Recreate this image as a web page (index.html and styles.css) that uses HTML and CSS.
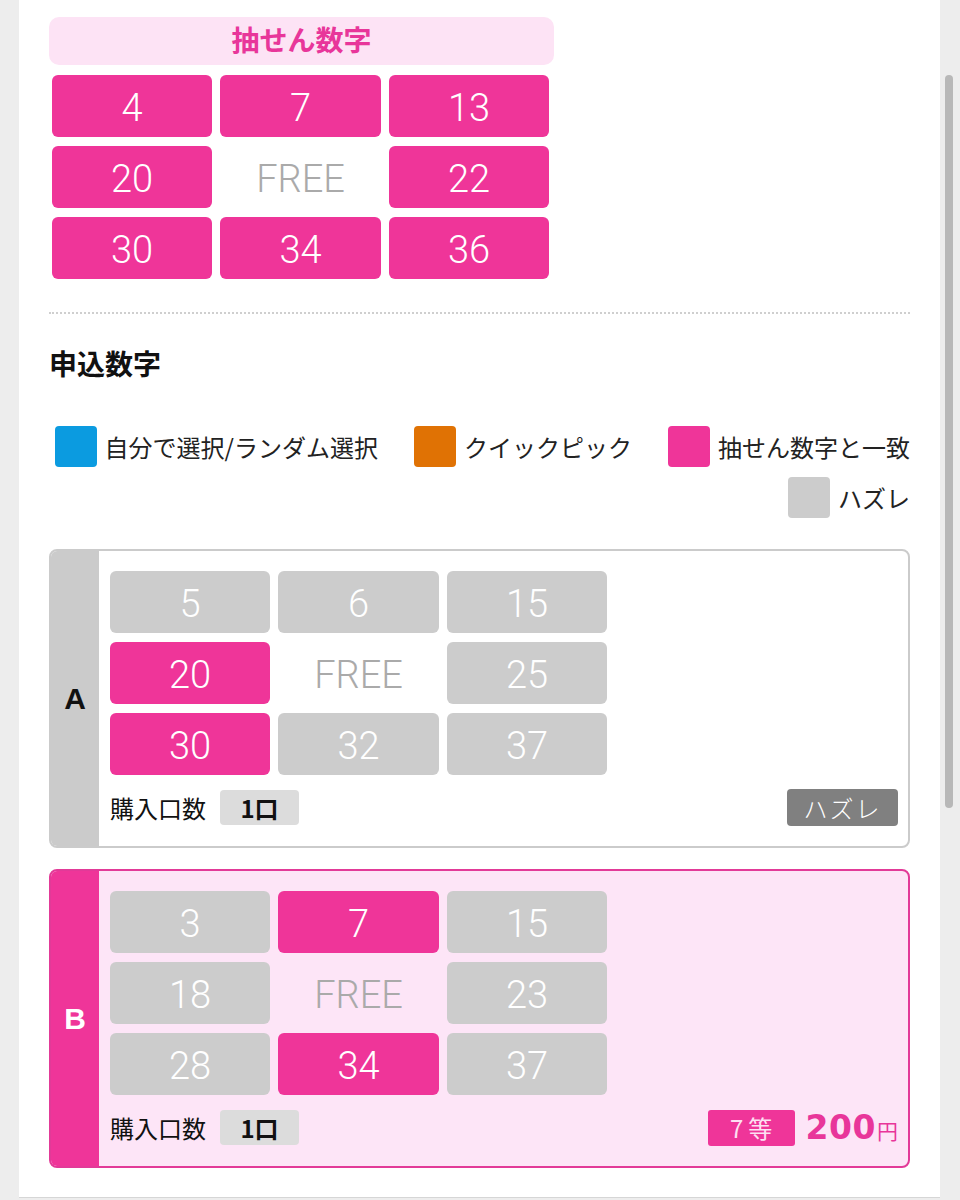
FILE: index.html
```html
<!DOCTYPE html>
<html lang="ja">
<head>
<meta charset="utf-8">
<title>抽せん結果</title>
<link rel="stylesheet" href="styles.css">
</head>
<body>
<div class="page">
  <section class="draw">
    <div class="draw-title">抽せん数字</div>
    <div class="grid draw-grid">
      <div class="cell hit">4</div>
      <div class="cell hit">7</div>
      <div class="cell hit">13</div>
      <div class="cell hit">20</div>
      <div class="cell free">FREE</div>
      <div class="cell hit">22</div>
      <div class="cell hit">30</div>
      <div class="cell hit">34</div>
      <div class="cell hit">36</div>
    </div>
  </section>

  <hr class="divider">

  <h2 class="sec-title">申込数字</h2>

  <ul class="legend">
    <li class="legend-item"><span class="swatch sw-blue"></span><span class="legend-text">自分で選択/ランダム選択</span></li>
    <li class="legend-item"><span class="swatch sw-orange"></span><span class="legend-text">クイックピック</span></li>
    <li class="legend-item"><span class="swatch sw-pink"></span><span class="legend-text">抽せん数字と一致</span></li>
    <li class="legend-item"><span class="swatch sw-gray"></span><span class="legend-text">ハズレ</span></li>
  </ul>

  <div class="ticket ticket-lose">
    <div class="ticket-label">A</div>
    <div class="ticket-body">
      <div class="grid">
        <div class="cell miss">5</div>
        <div class="cell miss">6</div>
        <div class="cell miss">15</div>
        <div class="cell hit">20</div>
        <div class="cell free">FREE</div>
        <div class="cell miss">25</div>
        <div class="cell hit">30</div>
        <div class="cell miss">32</div>
        <div class="cell miss">37</div>
      </div>
      <div class="ticket-foot">
        <div class="qty"><span class="qty-label">購入口数</span><span class="qty-badge">1口</span></div>
        <div class="result"><span class="badge-lose">ハズレ</span></div>
      </div>
    </div>
  </div>

  <div class="ticket ticket-win">
    <div class="ticket-label">B</div>
    <div class="ticket-body">
      <div class="grid">
        <div class="cell miss">3</div>
        <div class="cell hit">7</div>
        <div class="cell miss">15</div>
        <div class="cell miss">18</div>
        <div class="cell free">FREE</div>
        <div class="cell miss">23</div>
        <div class="cell miss">28</div>
        <div class="cell hit">34</div>
        <div class="cell miss">37</div>
      </div>
      <div class="ticket-foot">
        <div class="qty"><span class="qty-label">購入口数</span><span class="qty-badge">1口</span></div>
        <div class="result"><span class="badge-rank">7等</span><span class="prize"><span class="prize-num">200</span><span class="prize-unit">円</span></span></div>
      </div>
    </div>
  </div>
</div>
<div class="scrollbar"></div>
</body>
</html>
```
FILE: styles.css
```css
html, body {
  margin: 0;
  padding: 0;
}
body {
  background: #ededed;
  width: 960px;
  height: 1200px;
  overflow: hidden;
  position: relative;
  font-family: "Noto Sans CJK JP", "Noto Sans", sans-serif;
  color: #111;
}
.page {
  margin-left: 19px;
  width: 921px;
  height: 1198px;
  box-sizing: border-box;
  background: #fff;
  border-bottom: 1px solid #d6d6d6;
  padding: 17px 30px 0 30px;
}

/* draw numbers */
.draw {
  width: 505px;
}
.draw-title {
  height: 48px;
  line-height: 45px;
  background: #fde3f5;
  border-radius: 10px;
  text-align: center;
  color: #e8369a;
  font-weight: 700;
  font-size: 28px;
}
.grid {
  display: grid;
  grid-template-columns: 160px 161px 160px;
  grid-auto-rows: 62px;
  column-gap: 8px;
  row-gap: 9px;
}
.draw-grid {
  margin-top: 10px;
  margin-left: 3px;
}
.cell {
  border-radius: 6px;
  display: flex;
  align-items: center;
  justify-content: center;
  padding-top: 4px;
  box-sizing: border-box;
  font-family: Roboto, "Open Sans", sans-serif;
  font-weight: 300;
  font-size: 38px;
  color: #fff;
}
.cell.hit {
  background: #ef3599;
}
.cell.miss {
  background: #cccccc;
}
.cell.free {
  color: #aaaaaa;
  background: transparent;
}

.divider {
  margin: 33px 0 0 0;
  border: 0;
  border-top: 2px dotted #cfcfcf;
  height: 0;
}
.sec-title {
  margin: 35px 0 0 0;
  font-size: 28px;
  line-height: 28px;
  font-weight: 700;
  color: #111;
}

/* legend */
.legend {
  list-style: none;
  margin: 49px 0 0 0;
  padding: 0;
  display: flex;
  flex-wrap: wrap;
  justify-content: flex-end;
  column-gap: 36px;
  row-gap: 10px;
}
.legend-item {
  display: flex;
  align-items: center;
  gap: 8px;
}
.swatch {
  width: 42px;
  height: 41px;
  border-radius: 4px;
  display: block;
}
.sw-blue { background: #0b9be0; }
.sw-orange { background: #e07204; }
.sw-pink { background: #ef3599; }
.sw-gray { background: #cccccc; }
.legend-text {
  font-size: 24px;
  line-height: 30px;
  color: #222;
}

/* tickets */
.ticket {
  display: flex;
  border: 2px solid #cbcbcb;
  border-radius: 8px;
  overflow: hidden;
  margin-top: 31px;
  background: #fff;
}
.ticket + .ticket {
  margin-top: 21px;
}
.ticket-label {
  width: 48px;
  flex: none;
  background: #cbcbcb;
  display: flex;
  align-items: center;
  justify-content: center;
  font-family: "Liberation Sans", Arial, sans-serif;
  font-weight: 700;
  font-size: 30px;
  color: #111;
}
.ticket-body {
  flex: 1;
  padding: 20px 10px 20px 11px;
}
.ticket-win {
  border-color: #e23a98;
  background: #fde5f7;
}
.ticket-win .ticket-label {
  background: #ef3599;
  color: #fff;
}
.ticket-foot {
  margin-top: 14px;
  height: 37px;
  display: flex;
  align-items: center;
  justify-content: space-between;
}
.qty {
  display: flex;
  align-items: center;
  gap: 14px;
}
.qty-label {
  font-size: 24px;
  color: #111;
}
.qty-badge {
  background: #dcdcdc;
  border-radius: 4px;
  width: 79px;
  height: 35px;
  display: flex;
  align-items: center;
  justify-content: center;
  font-weight: 700;
  font-size: 24px;
  color: #111;
}
.result {
  display: flex;
  align-items: center;
  gap: 11px;
}
.badge-lose {
  background: #808080;
  color: #fff;
  border-radius: 4px;
  width: 111px;
  height: 37px;
  display: flex;
  align-items: center;
  justify-content: center;
  font-size: 24px;
  font-weight: 300;
  letter-spacing: 2px;
}
.badge-rank {
  background: #ef3599;
  color: #fde0f2;
  border-radius: 3px;
  width: 87px;
  height: 36px;
  display: flex;
  align-items: center;
  justify-content: center;
  font-size: 24px;
  letter-spacing: 5px;
  text-indent: 5px;
}
.prize {
  color: #e8369a;
  display: flex;
  align-items: baseline;
}
.prize-num {
  font-family: "DejaVu Sans", sans-serif;
  font-weight: 700;
  font-size: 33px;
  letter-spacing: 0.5px;
}
.prize-unit {
  font-size: 21px;
  margin-left: 1px;
}

.scrollbar {
  position: absolute;
  left: 945px;
  top: 75px;
  width: 8px;
  height: 733px;
  border-radius: 4px;
  background: #b8b8b8;
}
```
